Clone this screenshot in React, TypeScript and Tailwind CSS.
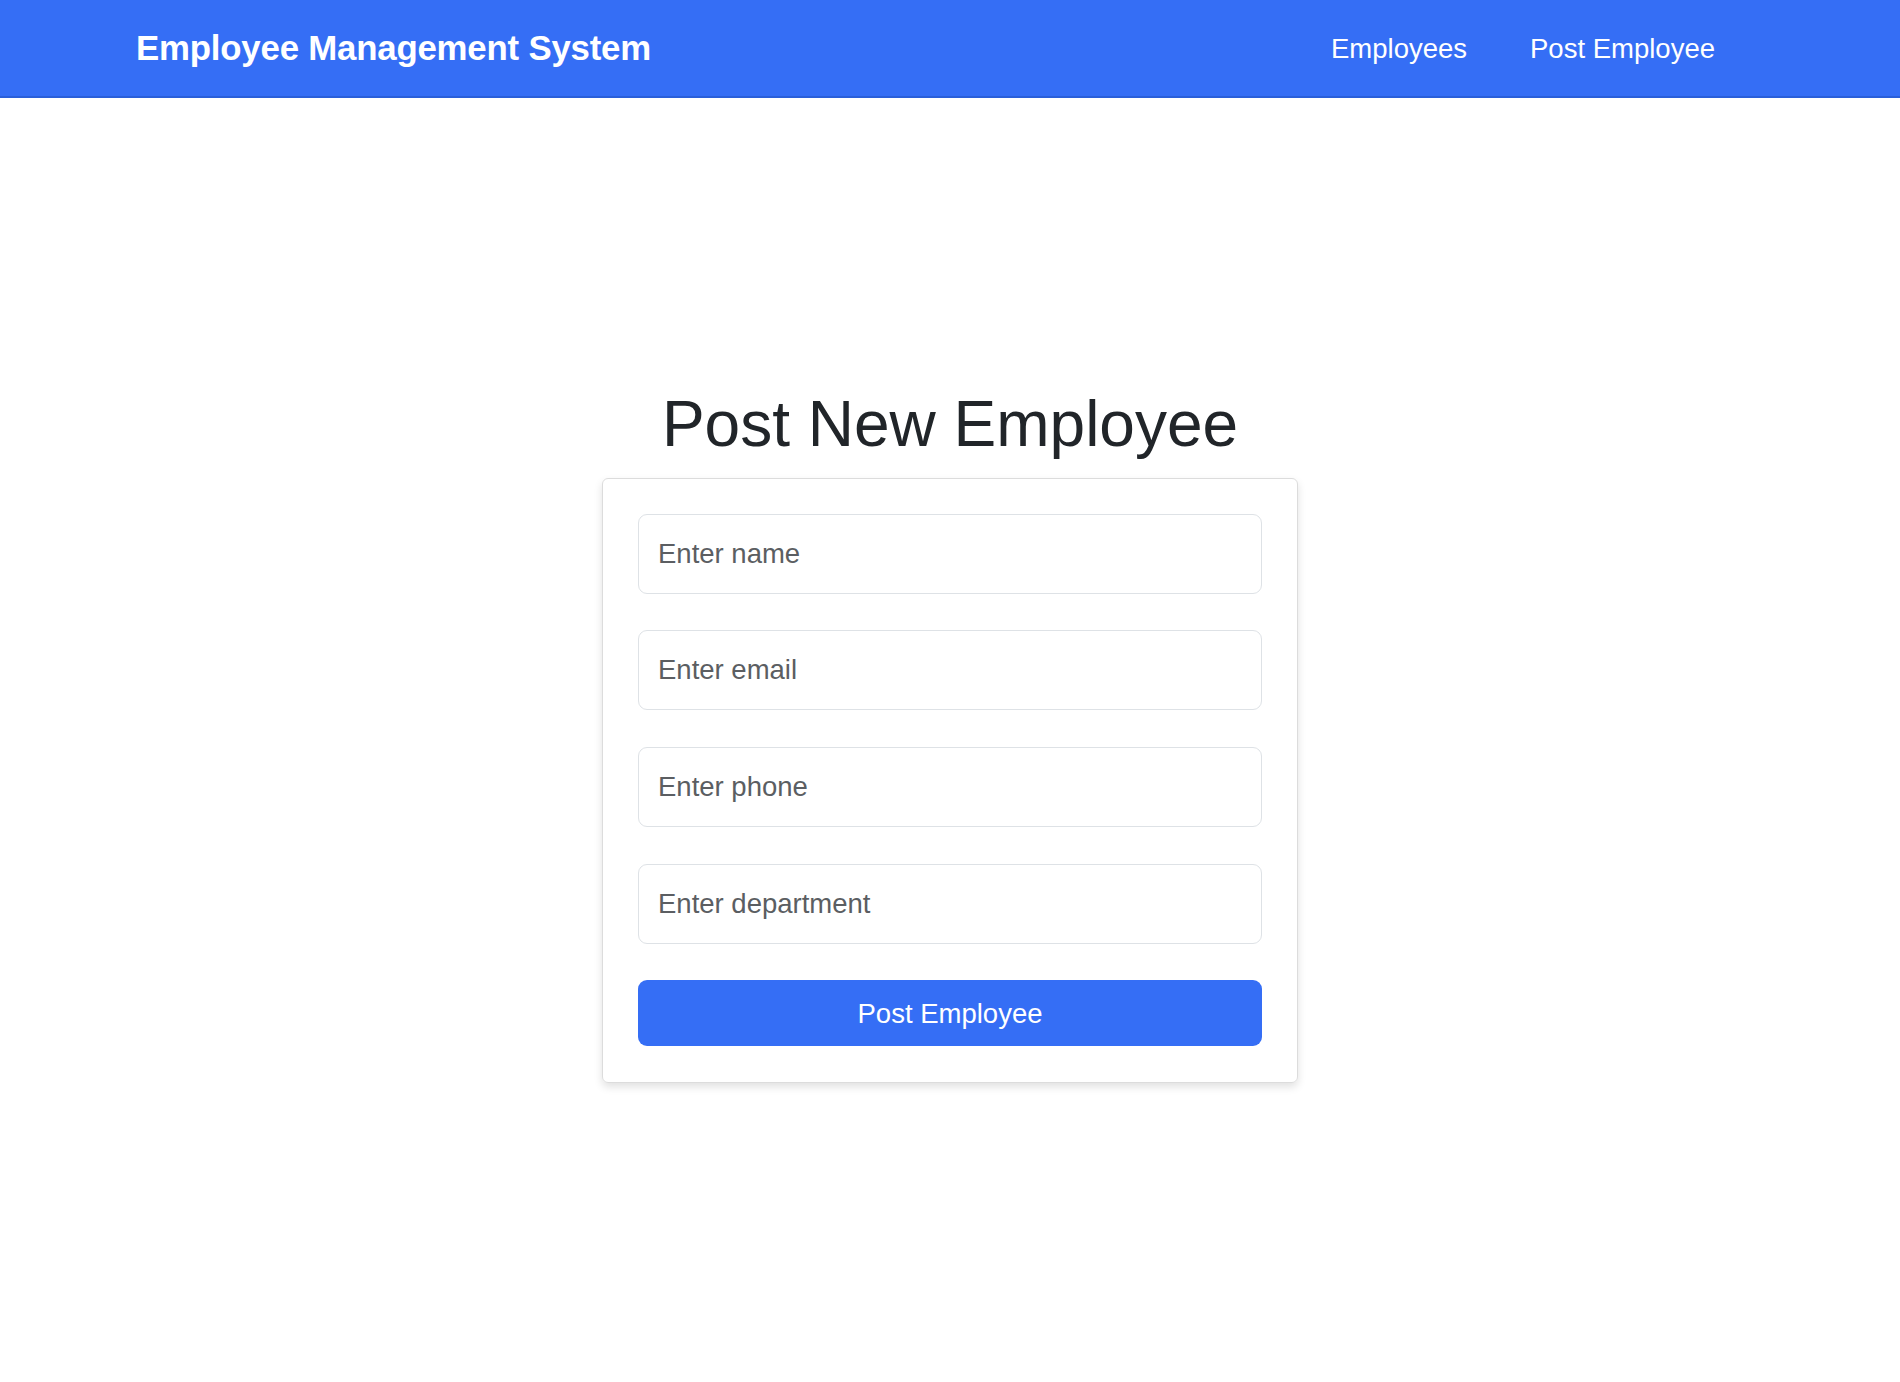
import React, { useState } from "react";

const fields = [
	{ name: "name", placeholder: "Enter name" },
	{ name: "email", placeholder: "Enter email" },
	{ name: "phone", placeholder: "Enter phone" },
	{ name: "department", placeholder: "Enter department" },
];

const Navbar = () => (
	<nav className="h-[98px] bg-[#356ef5] border-b-2 border-[#2a5fd9] flex items-center justify-between pl-[136px] pr-[185px]">
		<a href="#" className="text-white font-bold text-[34.8px] tracking-[-0.2px] pt-[1px]">
			Employee Management System
		</a>
		<div className="flex items-center gap-[63px] text-white text-[27.5px] pt-[1px]">
			<a href="#">Employees</a>
			<a href="#">Post Employee</a>
		</div>
	</nav>
);

export default function App() {
	const [form, setForm] = useState<Record<string, string>>({});

	return (
		<div className="min-h-screen bg-white font-['Liberation_Sans',Arial,sans-serif]">
			<Navbar />
			<main className="flex flex-col items-center pt-[288px]">
				<h1 className="text-[#212529] text-[64px] leading-[1.2] font-medium mb-[15px]">
					Post New Employee
				</h1>
				<form
					className="w-[696px] border border-[#dcdcdc] rounded-[6px] shadow-[0_4px_8px_rgba(0,0,0,0.12)] p-[35px] pb-[36px] flex flex-col gap-[36.6px]"
					onSubmit={(e) => e.preventDefault()}
				>
					{fields.map((f) => (
						<input
							key={f.name}
							type="text"
							placeholder={f.placeholder}
							value={form[f.name] || ""}
							onChange={(e) =>
								setForm({ ...form, [f.name]: e.target.value })
							}
							className="h-[80px] w-full border border-[#dee2e6] rounded-[9px] px-[19px] text-[27.5px] text-[#212529] placeholder:text-[#5b5e62] outline-none"
						/>
					))}
					<button
						type="submit"
						className="h-[66px] w-full rounded-[9px] bg-[#356ef5] text-white text-[27.5px]"
					>
						Post Employee
					</button>
				</form>
			</main>
		</div>
	);
}
